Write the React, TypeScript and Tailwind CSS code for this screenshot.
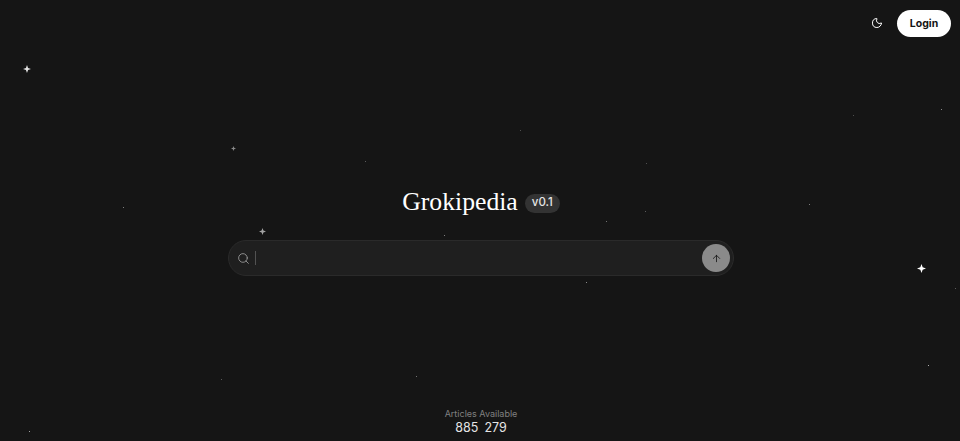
import { ArrowUp, Moon, Search } from 'lucide-react';

const sparkles = [
  { x: 27, y: 69, size: 8, color: '#e5e5e5' },
  { x: 921.5, y: 268, size: 9, color: '#ffffff' },
  { x: 262, y: 231, size: 7, color: '#a3a3a3' },
  { x: 233.5, y: 148.5, size: 5, color: '#8a8a8a' },
];

const dots = [
  { x: 123, y: 207, o: 0.45 },
  { x: 365, y: 161, o: 0.3 },
  { x: 444, y: 235, o: 0.45 },
  { x: 520, y: 130, o: 0.25 },
  { x: 646, y: 163, o: 0.25 },
  { x: 645, y: 211, o: 0.3 },
  { x: 606, y: 221, o: 0.4 },
  { x: 586, y: 282, o: 0.5 },
  { x: 809, y: 204, o: 0.45 },
  { x: 853, y: 115, o: 0.25 },
  { x: 941, y: 109, o: 0.5 },
  { x: 955, y: 288, o: 0.3 },
  { x: 928, y: 365, o: 0.65 },
  { x: 416, y: 376, o: 0.4 },
  { x: 221, y: 379, o: 0.3 },
  { x: 29, y: 431, o: 0.6 },
];

function Sparkle({ x, y, size, color }: { x: number; y: number; size: number; color: string }) {
  return (
    <svg
      className="absolute"
      style={{ left: x - size / 2, top: y - size / 2, width: size, height: size }}
      viewBox="0 0 10 10"
    >
      <path d="M5 0 L6.3 3.7 L10 5 L6.3 6.3 L5 10 L3.7 6.3 L0 5 L3.7 3.7 Z" fill={color} />
    </svg>
  );
}

export default function App() {
  return (
    <div className="relative flex h-[441px] w-full flex-col overflow-hidden bg-[#151515] font-['Inter',sans-serif] text-white">
      {sparkles.map((star) => (
        <Sparkle key={`${star.x}-${star.y}`} {...star} />
      ))}
      {dots.map((dot) => (
        <div
          key={`${dot.x}-${dot.y}`}
          className="absolute h-px w-px bg-white"
          style={{ left: dot.x, top: dot.y, opacity: dot.o }}
        />
      ))}

      <header className="relative flex h-[47px] items-start justify-end gap-[14px] pr-[9px] pt-[10px]">
        <Moon className="mt-[7px] h-[12px] w-[12px] text-white" strokeWidth={2} />
        <button className="h-[27px] w-[54px] rounded-full bg-white text-[10.5px] font-bold text-[#151515]">
          Login
        </button>
      </header>

      <main className="relative flex flex-1 flex-col items-center pl-[2px] pt-[140px]">
        <div className="flex h-[30px] items-center gap-[7px]">
          <h1 className="font-['Liberation_Serif',serif] text-[25.7px] font-normal leading-[30px] text-white">
            Grokipedia
          </h1>
          <span className="mt-[2px] flex h-[19px] w-[35px] items-center justify-center rounded-full bg-[#333333] text-[11.5px] font-medium text-[#e5e5e5]">
            v0.1
          </span>
        </div>
        <div className="mt-[23px] flex h-[36px] w-[506px] items-center rounded-full border border-[#2a2a2a] bg-[#1f1f1f] pl-[8px] pr-[3px]">
          <Search className="h-[13px] w-[13px] text-[#a3a3a3]" strokeWidth={1.5} />
          <div className="ml-[5px] h-[14px] w-px bg-[#525252]" />
          <button className="ml-auto flex h-[28px] w-[28px] items-center justify-center rounded-full bg-[#8a8a8a]">
            <ArrowUp className="h-[11px] w-[11px] text-[#111111]" strokeWidth={1.75} />
          </button>
        </div>
      </main>

      <footer className="relative flex flex-col items-center pb-[5px] pl-[2px]">
        <span className="text-[9px] leading-[13px] text-[#808080]">Articles Available</span>
        <span className="flex gap-[6px] text-[12.5px] leading-[16px] text-[#e5e5e5]">
          <span>885</span>
          <span>279</span>
        </span>
      </footer>
    </div>
  );
}
